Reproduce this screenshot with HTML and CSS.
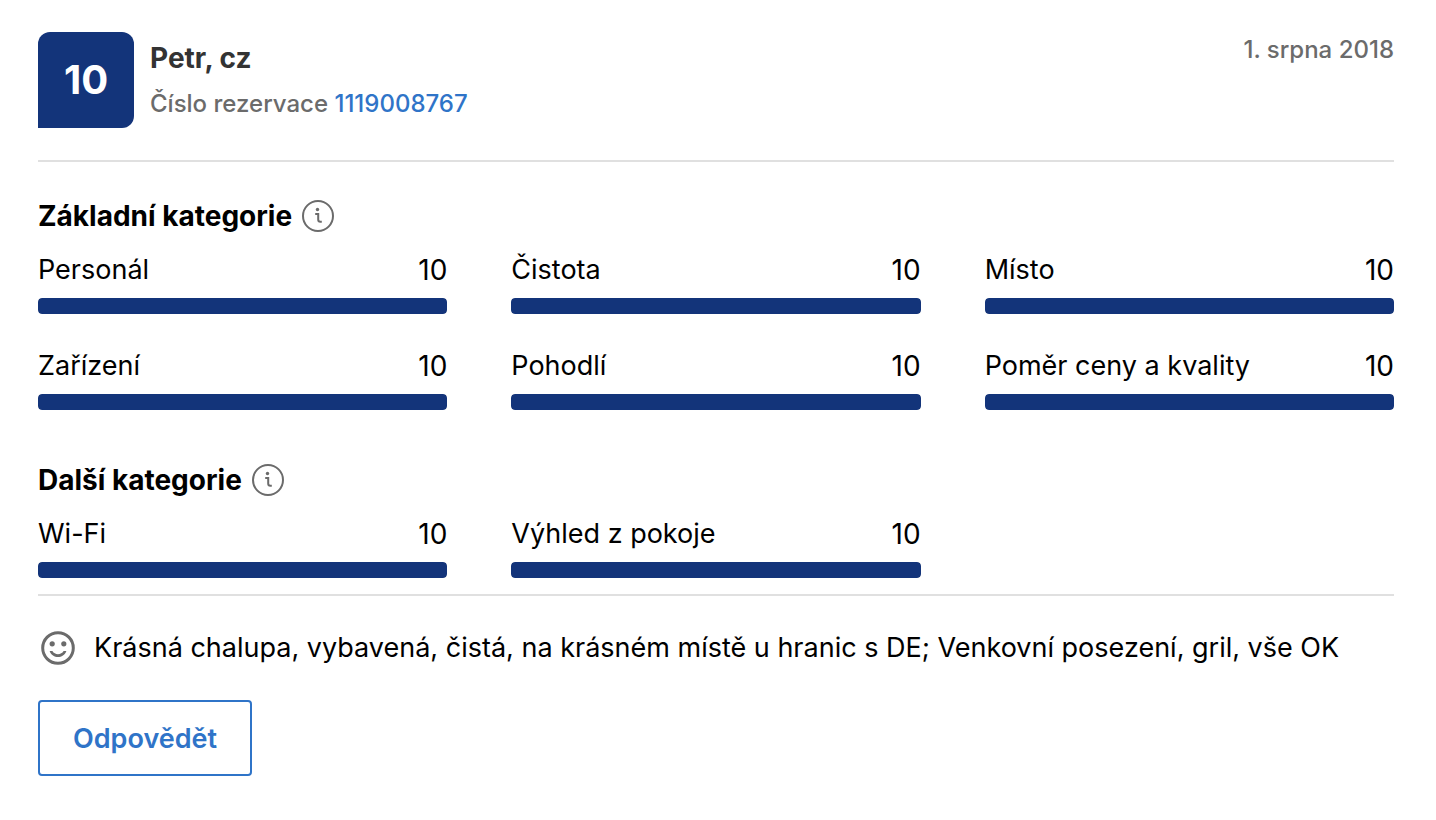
FILE: index.html
```html
<!DOCTYPE html>
<html lang="cs">
<head>
    <meta charset="UTF-8">
    <meta name="viewport" content="width=device-width, initial-scale=1">
    <title>Hodnocení hosta</title>
    <link rel="stylesheet" href="styles.css">
</head>
<body>
<article class="review">
    <header class="review-header">
        <div class="score">10</div>
        <div class="guest">
            <h2 class="guest-name">Petr, cz</h2>
            <p class="booking">Číslo rezervace <a href="#">1119008767</a></p>
        </div>
        <time class="date" datetime="2018-08-01">1. srpna 2018</time>
    </header>

    <section class="ratings">
        <h3 class="ratings-title">
            Základní kategorie
            <svg class="info-icon" viewBox="0 0 32 32" aria-hidden="true">
                <circle cx="16" cy="16" r="15"/>
                <path d="M13.2 14h3v5.6q0 2.2 2.2 2.2h1.4"/>
                <circle class="dot" cx="15.5" cy="9.5" r="1.7"/>
            </svg>
        </h3>
        <div class="grid">
            <div class="rating">
                <div class="rating-label"><span>Personál</span><span class="value">10</span></div>
                <div class="bar"><div class="bar-fill" style="width: 100%"></div></div>
            </div>
            <div class="rating">
                <div class="rating-label"><span>Čistota</span><span class="value">10</span></div>
                <div class="bar"><div class="bar-fill" style="width: 100%"></div></div>
            </div>
            <div class="rating">
                <div class="rating-label"><span>Místo</span><span class="value">10</span></div>
                <div class="bar"><div class="bar-fill" style="width: 100%"></div></div>
            </div>
            <div class="rating">
                <div class="rating-label"><span>Zařízení</span><span class="value">10</span></div>
                <div class="bar"><div class="bar-fill" style="width: 100%"></div></div>
            </div>
            <div class="rating">
                <div class="rating-label"><span>Pohodlí</span><span class="value">10</span></div>
                <div class="bar"><div class="bar-fill" style="width: 100%"></div></div>
            </div>
            <div class="rating">
                <div class="rating-label"><span>Poměr ceny a kvality</span><span class="value">10</span></div>
                <div class="bar"><div class="bar-fill" style="width: 100%"></div></div>
            </div>
        </div>
    </section>

    <section class="ratings ratings-other">
        <h3 class="ratings-title">
            Další kategorie
            <svg class="info-icon" viewBox="0 0 32 32" aria-hidden="true">
                <circle cx="16" cy="16" r="15"/>
                <path d="M13.2 14h3v5.6q0 2.2 2.2 2.2h1.4"/>
                <circle class="dot" cx="15.5" cy="9.5" r="1.7"/>
            </svg>
        </h3>
        <div class="grid">
            <div class="rating">
                <div class="rating-label"><span>Wi-Fi</span><span class="value">10</span></div>
                <div class="bar"><div class="bar-fill" style="width: 100%"></div></div>
            </div>
            <div class="rating">
                <div class="rating-label"><span>Výhled z pokoje</span><span class="value">10</span></div>
                <div class="bar"><div class="bar-fill" style="width: 100%"></div></div>
            </div>
        </div>
    </section>

    <div class="comment">
        <svg class="smile-icon" viewBox="0 0 40 40" aria-hidden="true">
            <circle cx="20" cy="20" r="15.3"/>
            <path class="dot" d="M11.6 23h2.8c2.4 4.2 8.8 4.2 11.2 0h2.8c-3 8-13.800 8-16.800 0z"/>
            <circle class="dot" cx="14.2" cy="15.8" r="2.6"/>
            <circle class="dot" cx="25.8" cy="15.8" r="2.6"/>
        </svg>
        <p>Krásná chalupa, vybavená, čistá, na krásném místě u hranic s DE; Venkovní posezení, gril, vše OK</p>
    </div>

    <button class="reply" type="button">Odpovědět</button>
</article>
</body>
</html>
```
FILE: styles.css
```css
* {
    box-sizing: border-box;
    margin: 0;
    padding: 0;
}
body {
    background: #fff;
    color: #000;
    font-family: Inter, "Liberation Sans", sans-serif;
    font-size: 27px;
    line-height: 40px;
}
.review {
    padding: 32px 42px 44px 38px;
}
.review-header {
    display: flex;
    gap: 16px;
    padding-bottom: 32px;
    border-bottom: 2px solid #e0e0e0;
}
.score {
    display: flex;
    align-items: center;
    justify-content: center;
    width: 96px;
    height: 96px;
    border-radius: 12px 12px 12px 0;
    background: #13347a;
    color: #fff;
    font-size: 40px;
    font-weight: 700;
}
.guest {
    flex: 1;
    padding-top: 6px;
}
.guest-name {
    color: #333;
    font-size: 28px;
    font-weight: 700;
}
.booking {
    padding-top: 8px;
    color: #6b6b6b;
    font-size: 24px;
    font-weight: 500;
    line-height: 36px;
}
.booking a {
    color: #2f74c8;
    text-decoration: none;
}
.date {
    color: #6b6b6b;
    font-size: 24px;
    font-weight: 500;
    line-height: 36px;
}
.ratings {
    padding-top: 34px;
}
.ratings-other {
    padding: 50px 0 16px;
    border-bottom: 2px solid #e0e0e0;
}
.ratings-title {
    display: flex;
    align-items: center;
    gap: 10px;
    margin-bottom: 14px;
    font-size: 28px;
    font-weight: 700;
}
.info-icon {
    width: 32px;
    height: 32px;
    fill: none;
    stroke: #6b6b6b;
    stroke-width: 2;
}
.dot {
    fill: #6b6b6b;
    stroke: none;
}
.grid {
    display: grid;
    grid-template-columns: repeat(3, 1fr);
    gap: 32px 64px;
}
.rating-label {
    display: flex;
    justify-content: space-between;
    padding-bottom: 8px;
}
.value {
    font-size: 28px;
}
.bar {
    height: 16px;
    border-radius: 4px;
    background: #e0e0e0;
    overflow: hidden;
}
.bar-fill {
    height: 100%;
    border-radius: 4px;
    background: #13347a;
}
.comment {
    display: flex;
    align-items: flex-start;
    gap: 16px;
    padding: 32px 0;
}
.smile-icon {
    flex-shrink: 0;
    width: 40px;
    height: 40px;
    fill: none;
    stroke: #6b6b6b;
    stroke-width: 3;
}
.reply {
    height: 76px;
    padding: 0 33px;
    border: 2px solid #2f74c8;
    border-radius: 4px;
    background: #fff;
    color: #2f74c8;
    font-family: inherit;
    font-size: 27px;
    font-weight: 600;
    cursor: pointer;
}
```
